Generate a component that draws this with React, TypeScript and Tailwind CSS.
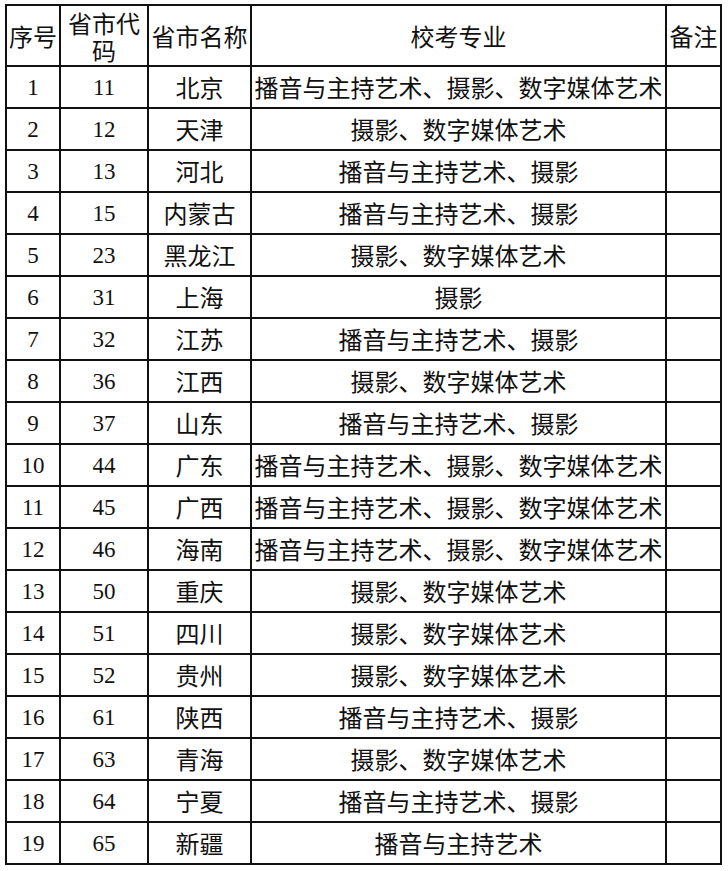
import React from "react";

const rows: [string, string, string, string][] = [
  ["1", "11", "北京", "播音与主持艺术、摄影、数字媒体艺术"],
  ["2", "12", "天津", "摄影、数字媒体艺术"],
  ["3", "13", "河北", "播音与主持艺术、摄影"],
  ["4", "15", "内蒙古", "播音与主持艺术、摄影"],
  ["5", "23", "黑龙江", "摄影、数字媒体艺术"],
  ["6", "31", "上海", "摄影"],
  ["7", "32", "江苏", "播音与主持艺术、摄影"],
  ["8", "36", "江西", "摄影、数字媒体艺术"],
  ["9", "37", "山东", "播音与主持艺术、摄影"],
  ["10", "44", "广东", "播音与主持艺术、摄影、数字媒体艺术"],
  ["11", "45", "广西", "播音与主持艺术、摄影、数字媒体艺术"],
  ["12", "46", "海南", "播音与主持艺术、摄影、数字媒体艺术"],
  ["13", "50", "重庆", "摄影、数字媒体艺术"],
  ["14", "51", "四川", "摄影、数字媒体艺术"],
  ["15", "52", "贵州", "摄影、数字媒体艺术"],
  ["16", "61", "陕西", "播音与主持艺术、摄影"],
  ["17", "63", "青海", "摄影、数字媒体艺术"],
  ["18", "64", "宁夏", "播音与主持艺术、摄影"],
  ["19", "65", "新疆", "播音与主持艺术"],
];

const cjk = "font-['Noto_Sans_CJK_SC',sans-serif]";
const serif = "font-['Liberation_Serif','Noto_Sans_CJK_SC',serif]";

export default function App() {
  return (
    <div className="bg-white w-[728px] h-[871px] pt-[4px] pl-[5px] text-[#111]">
      <div className="grid grid-cols-[52px_86px_101px_413px_53px] grid-rows-[59px_repeat(19,40px)] gap-[2px] bg-[#111] p-[2px] w-[717px]">
        <div className={`bg-white flex items-center justify-center text-[24px] leading-none ${cjk}`}>序号</div>
        <div className={`bg-white flex items-center justify-center text-center text-[24px] leading-[27px] ${cjk}`}>
          省市代<br />码
        </div>
        <div className={`bg-white flex items-center justify-center text-[24px] leading-none ${cjk}`}>省市名称</div>
        <div className={`bg-white flex items-center justify-center text-[24px] leading-none ${cjk}`}>校考专业</div>
        <div className={`bg-white flex items-center justify-center text-[24px] leading-none ${cjk}`}>备注</div>
        {rows.map((r) => (
          <React.Fragment key={r[0]}>
            <div className={`bg-white flex items-center justify-center text-[23px] leading-none ${serif}`}>{r[0]}</div>
            <div className={`bg-white flex items-center justify-center text-[23px] leading-none ${serif}`}>{r[1]}</div>
            <div className={`bg-white flex items-center justify-center text-[24px] leading-none ${cjk}`}>{r[2]}</div>
            <div className={`bg-white flex items-center justify-center text-[24px] leading-none whitespace-nowrap ${cjk}`}>{r[3]}</div>
            <div className="bg-white" />
          </React.Fragment>
        ))}
      </div>
    </div>
  );
}
